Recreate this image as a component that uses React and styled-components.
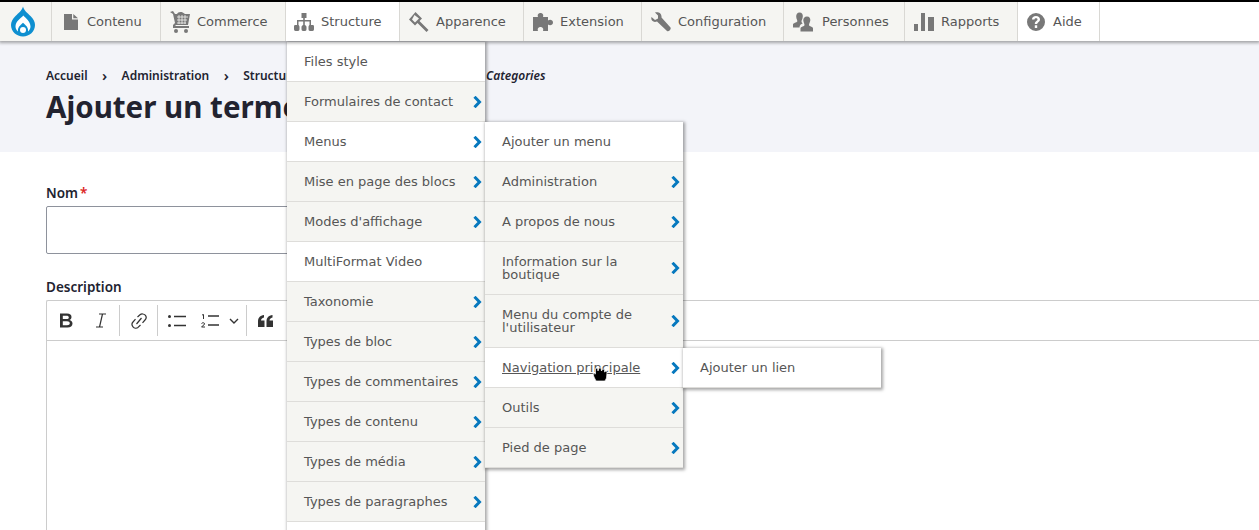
import React from 'react'
import styled, { createGlobalStyle } from 'styled-components'

const GlobalStyle = createGlobalStyle`
  html, body {
    margin: 0;
    padding: 0;
    background: #fff;
    overflow: hidden;
  }
  body {
    width: 1259px;
    height: 530px;
  }
`

const Page = styled.div`
  position: relative;
  width: 1259px;
  height: 530px;
  overflow: hidden;
  border-top: 2px solid #000;
  box-sizing: border-box;
  font-family: "Noto Sans", sans-serif;
`

const Toolbar = styled.nav`
  position: relative;
  z-index: 3;
  display: flex;
  height: 39px;
  background: #fff;
  box-shadow: 0 1px 3px 1px rgba(0, 0, 0, 0.33);
  font-family: "DejaVu Sans", sans-serif;
`

const ToolItem = styled.div`
  display: flex;
  align-items: center;
  box-sizing: border-box;
  width: ${p => p.$w}px;
  padding-left: ${p => p.$pad}px;
  gap: ${p => p.$gap}px;
  background: ${p => (p.$active ? '#fff' : '#f5f5f2')};
  border-right: 1px solid #d9d8d4;
  color: #565656;
  font-size: 13px;
`

const Logo = styled(ToolItem)`
  padding-left: 11px;
`

const Hero = styled.header`
  height: 111px;
  padding: 27px 46px 0;
  background: #f3f4f9;
  box-sizing: border-box;
`

const Crumbs = styled.div`
  display: flex;
  align-items: center;
  height: 14px;
  font-size: 12px;
  font-weight: 600;
  color: #222330;
`

const Crumb = styled.span`
  font-style: ${p => (p.$current ? 'italic' : 'normal')};
  margin-left: ${p => (p.$current ? '56px' : '0')};
`

const Sep = styled.span`
  width: 34px;
  text-align: center;
  font-size: 15px;
  line-height: 14px;
`

const Title = styled.h1`
  margin: 7px 0 0;
  font-size: 29.5px;
  line-height: 36px;
  font-weight: 700;
  color: #222330;
`

const Form = styled.main`
  padding: 32px 0 0 46px;
`

const Label = styled.div`
  height: 18px;
  font-size: 13.5px;
  font-weight: 600;
  line-height: 18px;
  color: #222330;
`

const Required = styled.span`
  margin-left: 2px;
  color: #dc2323;
`

const NameInput = styled.div`
  box-sizing: border-box;
  width: 400px;
  height: 48px;
  margin-top: 4px;
  margin-bottom: 24px;
  background: #fff;
  border: 1px solid #8e929c;
  border-radius: 2px;
`

const Editor = styled.div`
  margin-top: 4px;
  height: 260px;
  border: 1px solid #ccc;
  border-right: none;
  border-radius: 2px 0 0 0;
`

const EditorBar = styled.div`
  display: flex;
  align-items: center;
  box-sizing: border-box;
  height: 40px;
  padding-left: 2px;
  border-bottom: 1px solid #ccc;
  color: #333;
`

const EditorTool = styled.span`
  display: flex;
  align-items: center;
  justify-content: center;
  box-sizing: border-box;
  width: ${p => p.$w}px;
  height: 30px;
  padding-right: ${p => p.$pr || 0}px;
`

const EditorSep = styled.span`
  width: 1px;
  height: 31px;
  margin: 0 1px;
  background: #ccc;
`

const Menu = styled.ul`
  position: absolute;
  z-index: 2;
  left: ${p => p.$left}px;
  top: ${p => p.$top}px;
  width: 198px;
  margin: 0;
  padding: 0;
  list-style: none;
  background: #f5f5f2;
  box-shadow: 1px 1px 3px 1px rgba(0, 0, 0, 0.35);
  font-family: "DejaVu Sans", sans-serif;
`

const Row = styled.li`
  position: relative;
  display: flex;
  align-items: center;
  box-sizing: border-box;
  min-height: ${p => (p.$tall ? 53 : 40)}px;
  padding: 0 20px 1px 17px;
  background: ${p => (p.$white ? '#fff' : 'transparent')};
  border-bottom: 1px solid #dedddA;
  font-size: 13px;
  line-height: 13px;
  color: #565656;
  text-decoration: ${p => (p.$hover ? 'underline' : 'none')};
`

const Arrow = styled.svg`
  position: absolute;
  right: 3px;
  top: 50%;
  margin-top: -6px;
`

const Cursor = styled.svg`
  position: absolute;
  z-index: 5;
  left: 592px;
  top: 364px;
`

const Chevron = () => (
  <Arrow width="9" height="12" viewBox="0 0 9 12">
    <path d="M1.500 0.800 L6.500 6 L1.500 11.200" fill="none" stroke="#0678be" strokeWidth="3" />
  </Arrow>
)

const items = (list) =>
  list.map(([label, opts = {}], i) => (
    <Row key={i} $white={opts.white} $tall={opts.tall} $hover={opts.hover}>
      {label}
      {opts.arrow !== false && <Chevron />}
    </Row>
  ))

const Icon = ({ children, w = 20, h = 20, box = '0 0 20 20' }) => (
  <svg width={w} height={h} viewBox={box} fill="#787878">{children}</svg>
)

const menu1 = [
  ['Files style', { white: true, arrow: false }],
  ['Formulaires de contact'],
  ['Menus', { white: true }],
  ['Mise en page des blocs'],
  ["Modes d'affichage"],
  ['MultiFormat Video', { white: true, arrow: false }],
  ['Taxonomie'],
  ['Types de bloc'],
  ['Types de commentaires'],
  ['Types de contenu'],
  ['Types de média'],
  ['Types de paragraphes'],
  ['', { white: true, arrow: false }],
]

const menu2 = [
  ['Ajouter un menu', { white: true, arrow: false }],
  ['Administration'],
  ['A propos de nous'],
  ['Information sur la boutique', { tall: true }],
  ["Menu du compte de l'utilisateur", { tall: true }],
  ['Navigation principale', { white: true, hover: true }],
  ['Outils'],
  ['Pied de page'],
]

const App = () => (
  <Page>
    <GlobalStyle />
    <Toolbar>
      <Logo $w={52}>
        <svg width="24" height="31" viewBox="0 0 24 31">
          <path d="M12 0.500 C13 4.500 16.500 7 19.500 10 C22.500 13 24 16 24 19 C24 25.500 18.500 30.500 12 30.500 C5.500 30.500 0 25.500 0 19 C0 16 1.500 13 4.500 10 C7.500 7 11 4.500 12 0.500 Z" fill="#0e8fd0" />
          <path d="M12.300 9.500 C14.500 12 19.500 15.500 19.500 20.500 C19.500 22.500 18.500 24.300 17 25.500 C17.500 21.500 15 19.500 12 16.800 C9 19.500 6.500 21.500 7 25.500 C5.500 24.300 4.500 22.500 4.500 20.500 C4.500 15.500 9.500 12.500 12.300 9.500 Z" fill="#fff" />
          <circle cx="12" cy="24" r="3" fill="#fff" />
        </svg>
      </Logo>
      <ToolItem $w={109} $pad={12} $gap={9}>
        <Icon w={14} h={16} box="0 0 14 16"><path d="M0 0 H8 V5.500 H14 V16 H0 Z M9.300 0 L14 4.300 H9.300 Z" /></Icon>
        Contenu
      </ToolItem>
      <ToolItem $w={125} $pad={9} $gap={6}>
        <Icon w={21} h={22} box="0 0 21 22">
          <path d="M0 1 L3 0 L5 3 L7 3 C8 0.500 12 0 15 3 L20 3 L18 14 L6 14 L5 15 L19 15 L19 17 L3 17 L3 14 L5 12 L3 3 Z" />
          <circle cx="6" cy="20" r="2" /><circle cx="16" cy="20" r="2" />
          <path d="M7 6 H18 M7 9 H17 M7 12 H16 M9 4 V13 M12 4 V13 M15 4 V13" stroke="#f5f5f2" strokeWidth="0.800" />
        </Icon>
        Commerce
      </ToolItem>
      <ToolItem $w={114} $pad={8} $gap={7} $active>
        <Icon w={20} h={18} box="0 0 20 18">
          <path d="M7.500 0 H12.500 V5 H10.800 V7 H17 V12 H19 C20 12 20 13 20 14 V16 C20 17 19.500 18 18.500 18 H16 C15 18 14.500 17 14.500 16 V14 C14.500 13 15 12 15.500 12 V8.500 H10.800 V12 C11.500 12 12.500 13 12.500 14 V16 C12.500 17 12 18 11 18 H9 C8 18 7.500 17 7.500 16 V14 C7.500 13 8.500 12 9.200 12 V8.500 H4.500 V12 C5 12 5.500 13 5.500 14 V16 C5.500 17 5 18 4 18 H1.500 C0.500 18 0 17 0 16 V14 C0 13 0 12 1 12 H3 V7 H9.200 V5 H7.500 Z" />
        </Icon>
        Structure
      </ToolItem>
      <ToolItem $w={124} $pad={9} $gap={7}>
        <Icon w={20} h={20} box="0 0 20 20">
          <path d="M6.500 0 L13 6.500 L10.500 9 L19.500 18 L17.500 20 L8.500 11 L6 13.500 L0 7.500 Z M5.500 3 L3 7.500 L6 10.500 L10 6.500 Z" fillRule="evenodd" />
        </Icon>
        Apparence
      </ToolItem>
      <ToolItem $w={118} $pad={9} $gap={7}>
        <Icon w={20} h={18} box="0 0 20 18">
          <path d="M0 4 H5 C4 1 6 0 7.500 0 C9 0 11 1 10 4 H15 V7.500 C17 6 20 7 20 9.500 C20 12 17 13 15 11.500 V18 H10 C11 15 9 14 7.500 14 C6 14 4 15 5 18 H0 Z" />
        </Icon>
        Extension
      </ToolItem>
      <ToolItem $w={142} $pad={9} $gap={7}>
        <Icon w={20} h={20} box="0 0 20 20">
          <path d="M0.500 5 L4 8 L7 6.500 L7 3.500 L4 0.500 C7 -0.500 11 1 10.500 5.500 L19.500 15.500 C20.500 17 18 20 16 19 L6 9.500 C2 11 -0.500 8 0.500 5 Z" />
        </Icon>
        Configuration
      </ToolItem>
      <ToolItem $w={121} $pad={9} $gap={9}>
        <Icon w={20} h={20} box="0 0 20 19">
          <path d="M6.500 0 C9 0 10 2 9.800 4 C9.600 6.500 8.500 7.500 8.500 9 C8.500 10 9 10.300 9.800 10.800 C8 11.500 6.500 12.800 6.500 15 H0 V12 C0 10.500 3.800 10 4.300 9 C4.700 8 3.200 6.500 3.200 4 C3.200 2 4.200 0 6.500 0 Z M14 4 C16.500 4 17.500 6 17.300 8 C17 10 16 11 16 12.500 C16 14 20 14 20 16 V19 H7.500 V16 C7.500 14 11.500 14 11.500 12.500 C11.500 11 10.500 10 10.300 8 C10.100 6 11.500 4 14 4 Z" />
        </Icon>
        Personnes
      </ToolItem>
      <ToolItem $w={113} $pad={9} $gap={7}>
        <Icon w={20} h={18} box="0 0 20 18">
          <path d="M0 11 H4 V18 H0 Z M7 0 H11 V18 H7 Z M14 4 H20 V18 H14 Z" />
        </Icon>
        Rapports
      </ToolItem>
      <ToolItem $w={82} $pad={9} $gap={8} $active>
        <Icon w={18} h={18} box="0 0 18 18">
          <path fillRule="evenodd" d="M9 0 A9 9 0 1 1 9 18 A9 9 0 1 1 9 0 Z M9 3 C6.500 3 5 4.500 5 6.500 H7.500 C7.500 5.700 8 5.200 9 5.200 C10 5.200 10.500 5.700 10.500 6.500 C10.500 8 7.800 8 7.800 11 H10.200 C10.200 9.200 13 9 13 6.500 C13 4.300 11.300 3 9 3 Z M7.800 12.300 V15 H10.200 V12.300 Z" />
        </Icon>
        Aide
      </ToolItem>
    </Toolbar>

    <Hero>
      <Crumbs>
        <Crumb>Accueil</Crumb>
        <Sep>›</Sep>
        <Crumb>Administration</Crumb>
        <Sep>›</Sep>
        <Crumb>Structure</Crumb>
        <Sep>›</Sep>
        <Crumb>Taxonomie</Crumb>
        <Sep>›</Sep>
        <Crumb $current>Categories</Crumb>
      </Crumbs>
      <Title>Ajouter un terme</Title>
    </Hero>

    <Form>
      <Label>Nom<Required>*</Required></Label>
      <NameInput />
      <Label>Description</Label>
      <Editor>
        <EditorBar>
          <EditorTool $w={34}>
            <svg width="14" height="15" viewBox="0 0 14 15"><path fillRule="evenodd" d="M1 0.500 H8 C11 0.500 12.500 2 12.500 4 C12.500 5.500 11.700 6.500 10.500 7 C12.200 7.500 13.500 8.700 13.500 10.500 C13.500 13 11.500 14.500 8.500 14.500 H1 Z M3.800 2.800 V6 H7.500 C9 6 9.800 5.400 9.800 4.400 C9.800 3.400 9 2.800 7.500 2.800 Z M3.800 8.200 V12.200 H8 C9.800 12.200 10.800 11.500 10.800 10.200 C10.800 8.900 9.800 8.200 8 8.200 Z" fill="#333" /></svg>
          </EditorTool>
          <EditorTool $w={35}>
            <svg width="12" height="15" viewBox="0 0 12 15"><path d="M4 1 H11 M1 14 H8 M7.500 1 L4.500 14" fill="none" stroke="#333" strokeWidth="1.200" /></svg>
          </EditorTool>
          <EditorSep />
          <EditorTool $w={35}>
            <svg width="16" height="16" viewBox="0 0 16 16"><path d="M6.500 4 L9 1.800 C10.500 0.500 13 0.800 14.200 2.200 C15.400 3.600 15.200 5.800 14 7 L11.500 9.800 M9.500 12 L7 14.400 C5.500 15.500 3.200 15.200 2 13.800 C0.800 12.400 0.800 10.300 2 9 L4.500 6.200 M10.500 5 L5.500 11" fill="none" stroke="#333" strokeWidth="1.200" /></svg>
          </EditorTool>
          <EditorSep />
          <EditorTool $w={35}>
            <svg width="18" height="12" viewBox="0 0 18 12"><circle cx="1.500" cy="1.500" r="1.500" fill="#333" /><circle cx="1.500" cy="10.500" r="1.500" fill="#333" /><path d="M6 1.500 H18 M6 10.500 H18" stroke="#333" strokeWidth="1.400" /></svg>
          </EditorTool>
          <EditorTool $w={32}>
            <svg width="18" height="14" viewBox="0 0 18 14"><path d="M7 2 H18 M7 11 H18" stroke="#333" strokeWidth="1.400" /><path d="M1 1 L2.500 0.500 V5 M0.500 9.500 C1 8.500 4 8.500 3.500 10 C3 11.500 1 12 0.500 13 H4" fill="none" stroke="#333" strokeWidth="1" /></svg>
          </EditorTool>
          <EditorTool $w={19} $pr={3}>
            <svg width="10" height="6" viewBox="0 0 10 6"><path d="M1 1 L5 5 L9 1" fill="none" stroke="#333" strokeWidth="1.400" /></svg>
          </EditorTool>
          <EditorSep />
          <EditorTool $w={35}>
            <svg width="15" height="12" viewBox="0 0 15 12"><path d="M0 12 V6 C0 3 2 0.500 6 0 V2.500 C4 3 3 4 3 5.500 H6.500 V12 Z M8.500 12 V6 C8.500 3 10.500 0.500 14.500 0 V2.500 C12.500 3 11.500 4 11.500 5.500 H15 V12 Z" fill="#333" /></svg>
          </EditorTool>
        </EditorBar>
      </Editor>
    </Form>

    <Menu $left={287} $top={40}>{items(menu1)}</Menu>
    <Menu $left={485} $top={120}>{items(menu2)}</Menu>
    <Menu $left={683} $top={346}>{items([['Ajouter un lien', { white: true, arrow: false }]])}</Menu>

    <Cursor width="16" height="16" viewBox="0 0 16 16">
      <path d="M3.500 2.500 L5.500 2 L6 5 L7 2 L9 2 L9.500 5 L10.500 3 L12.500 3.500 L12.500 6 L14 5 L15 6.500 L14.500 12 L13 15 L4 15 L2 11 L1 7.500 L3.500 8 Z" fill="#000" stroke="#fff" strokeWidth="0.700" />
    </Cursor>
  </Page>
)

export default App
